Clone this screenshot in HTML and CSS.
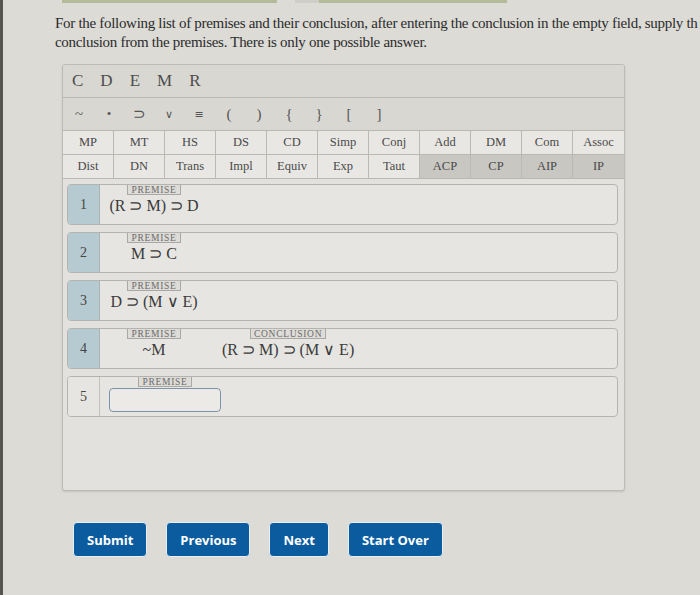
FILE: index.html
```html
<!DOCTYPE html>
<html lang="en">
<head>
<meta charset="utf-8">
<title>Proof exercise</title>
<link rel="stylesheet" href="styles.css">
</head>
<body>
<div class="page">
  <div class="topbars">
    <span class="bar bar-a"></span>
    <span class="bar bar-b"></span>
  </div>
  <p class="prompt"><span class="prompt-line">For the following list of premises and their conclusion, after entering the conclusion in the empty field, supply th</span><br>conclusion from the premises. There is only one possible answer.</p>

  <div class="panel">
    <div class="letters">
      <span>C</span><span>D</span><span>E</span><span>M</span><span>R</span>
    </div>
    <div class="symbols">
      <span class="sym tilde">~</span><span class="sym dot">•</span><span class="sym">⊃</span><span class="sym vee">∨</span><span class="sym eq">≡</span><span class="sym">(</span><span class="sym">)</span><span class="sym">{</span><span class="sym">}</span><span class="sym">[</span><span class="sym">]</span>
    </div>
    <div class="rules">
      <span class="rule">MP</span><span class="rule">MT</span><span class="rule">HS</span><span class="rule">DS</span><span class="rule">CD</span><span class="rule">Simp</span><span class="rule">Conj</span><span class="rule">Add</span><span class="rule">DM</span><span class="rule">Com</span><span class="rule">Assoc</span>
      <span class="rule">Dist</span><span class="rule">DN</span><span class="rule">Trans</span><span class="rule">Impl</span><span class="rule">Equiv</span><span class="rule">Exp</span><span class="rule">Taut</span><span class="rule dark">ACP</span><span class="rule dark">CP</span><span class="rule dark">AIP</span><span class="rule dark">IP</span>
    </div>

    <div class="lines">
      <div class="line">
        <div class="num">1</div>
        <div class="cell"><span class="tag">Premise</span><span class="wff">(R ⊃ M) ⊃ D</span></div>
      </div>
      <div class="line">
        <div class="num">2</div>
        <div class="cell"><span class="tag">Premise</span><span class="wff">M ⊃ C</span></div>
      </div>
      <div class="line">
        <div class="num">3</div>
        <div class="cell"><span class="tag">Premise</span><span class="wff">D ⊃ (M ∨ E)</span></div>
      </div>
      <div class="line">
        <div class="num">4</div>
        <div class="cell"><span class="tag">Premise</span><span class="wff">~M</span></div>
        <div class="cell concl"><span class="tag">Conclusion</span><span class="wff">(R ⊃ M) ⊃ (M ∨ E)</span></div>
      </div>
      <div class="line">
        <div class="num plain">5</div>
        <div class="cell"><span class="tag">Premise</span><input class="entry" type="text" aria-label="Premise 5"></div>
      </div>
    </div>
  </div>

  <div class="actions">
    <button class="btn" type="button">Submit</button>
    <button class="btn" type="button">Previous</button>
    <button class="btn" type="button">Next</button>
    <button class="btn" type="button">Start Over</button>
  </div>
</div>
</body>
</html>
```

FILE: styles.css
```css
* { box-sizing: border-box; }

html, body {
  margin: 0;
  padding: 0;
  width: 700px;
  height: 595px;
  overflow: hidden;
  background: #dcdbd6;
}

.page {
  width: 700px;
  height: 595px;
  border-left: 3px solid #55554f;
  font-family: "Liberation Serif", "Times New Roman", serif;
  color: #2f2f2f;
  overflow: hidden;
}

.topbars {
  display: flex;
  height: 3px;
  padding-left: 59px;
}
.bar { display: block; height: 3px; }
.bar-a { width: 215px; background: #b3bb98; }
.bar-b {
  width: 212px;
  margin-left: 18px;
  background: linear-gradient(to right, #cfcfc7 0, #cfcfc7 24px, #b3bb98 24px);
}

.prompt {
  margin: 11px 0 0 52px;
  font-size: 15px;
  line-height: 19px;
  letter-spacing: -0.3px;
  white-space: nowrap;
  color: #2b2b2b;
}

.panel {
  margin: 12px 0 0 59px;
  width: 563px;
  height: 427px;
  background: #e2e1dd;
  border: 1px solid #bcbbb6;
  border-radius: 3px;
  box-shadow: 0 1px 2px rgba(0,0,0,0.12);
  overflow: hidden;
}

.letters {
  display: flex;
  align-items: center;
  gap: 17px;
  height: 33px;
  padding-left: 9px;
  background: #d8d7d2;
  border-bottom: 1px solid #b9b8b3;
  font-size: 17px;
  color: #4d4d4d;
}

.symbols {
  display: flex;
  align-items: center;
  height: 33px;
  padding-left: 1px;
  background: #d8d7d2;
  border-bottom: 1px solid #b9b8b3;
  font-size: 15px;
  color: #555;
}
.sym {
  width: 30px;
  text-align: center;
}
.sym.tilde { font-size: 15px; }
.sym.dot { font-size: 13px; }
.sym.vee { font-family: "DejaVu Sans", sans-serif; font-size: 11px; }
.sym.eq { font-family: "DejaVu Sans", sans-serif; font-size: 11px; }

.rules {
  display: grid;
  grid-template-columns: repeat(11, 1fr);
  grid-template-rows: 24px 23px;
  border-bottom: 1px solid #b9b8b3;
}
.rule {
  display: flex;
  align-items: center;
  justify-content: center;
  background: #e8e7e3;
  border-right: 1px solid #bab9b4;
  border-bottom: 1px solid #bab9b4;
  font-size: 12.5px;
  color: #4a4a4a;
}
.rule:nth-child(11n) { border-right: none; }
.rule:nth-child(n+12) { border-bottom: none; }
.rule.dark { background: #c9c7c2; }

.lines {
  display: flex;
  flex-direction: column;
  gap: 7px;
  padding: 5px 6px 0 4px;
}

.line {
  display: flex;
  height: 41px;
  background: #e6e5e1;
  border: 1px solid #b4b3ae;
  border-radius: 4px;
  overflow: hidden;
}

.num {
  width: 32px;
  flex: none;
  display: flex;
  align-items: center;
  justify-content: center;
  background: #b6cbd1;
  border-right: 1px solid #a7b3b6;
  font-size: 14px;
  color: #454545;
}
.num.plain { background: #e6e5e1; border-right-color: #c2c1bc; }

.cell {
  display: flex;
  flex-direction: column;
  align-items: center;
  min-width: 90px;
  margin-left: 9px;
}
.cell.concl { margin-left: 23px; }

.tag {
  display: block;
  padding: 0 3px;
  height: 10px;
  line-height: 10px;
  font-size: 9.5px;
  letter-spacing: 0.7px;
  text-transform: uppercase;
  color: #6b6b6b;
  background: #dedcd8;
  border: 1px solid #a9a8a4;
  border-top: none;
}

.wff {
  margin-top: 2px;
  font-size: 16px;
  line-height: 18px;
  color: #3a3a3a;
  white-space: nowrap;
}

.entry {
  margin-top: 1px;
  width: 112px;
  height: 24px;
  background: #ebeae6;
  border: 1.5px solid #7e93a8;
  border-radius: 4px;
  outline: none;
}

.actions {
  display: flex;
  gap: 19px;
  margin: 31px 0 0 70px;
}

.btn {
  height: 35px;
  padding: 0 13px;
  background: #0b5c9f;
  color: #ffffff;
  border: 1px solid #e6f0f6;
  border-radius: 4px;
  font-family: "Open Sans", "Liberation Sans", sans-serif;
  font-weight: 700;
  font-size: 13px;
  cursor: pointer;
}
```
